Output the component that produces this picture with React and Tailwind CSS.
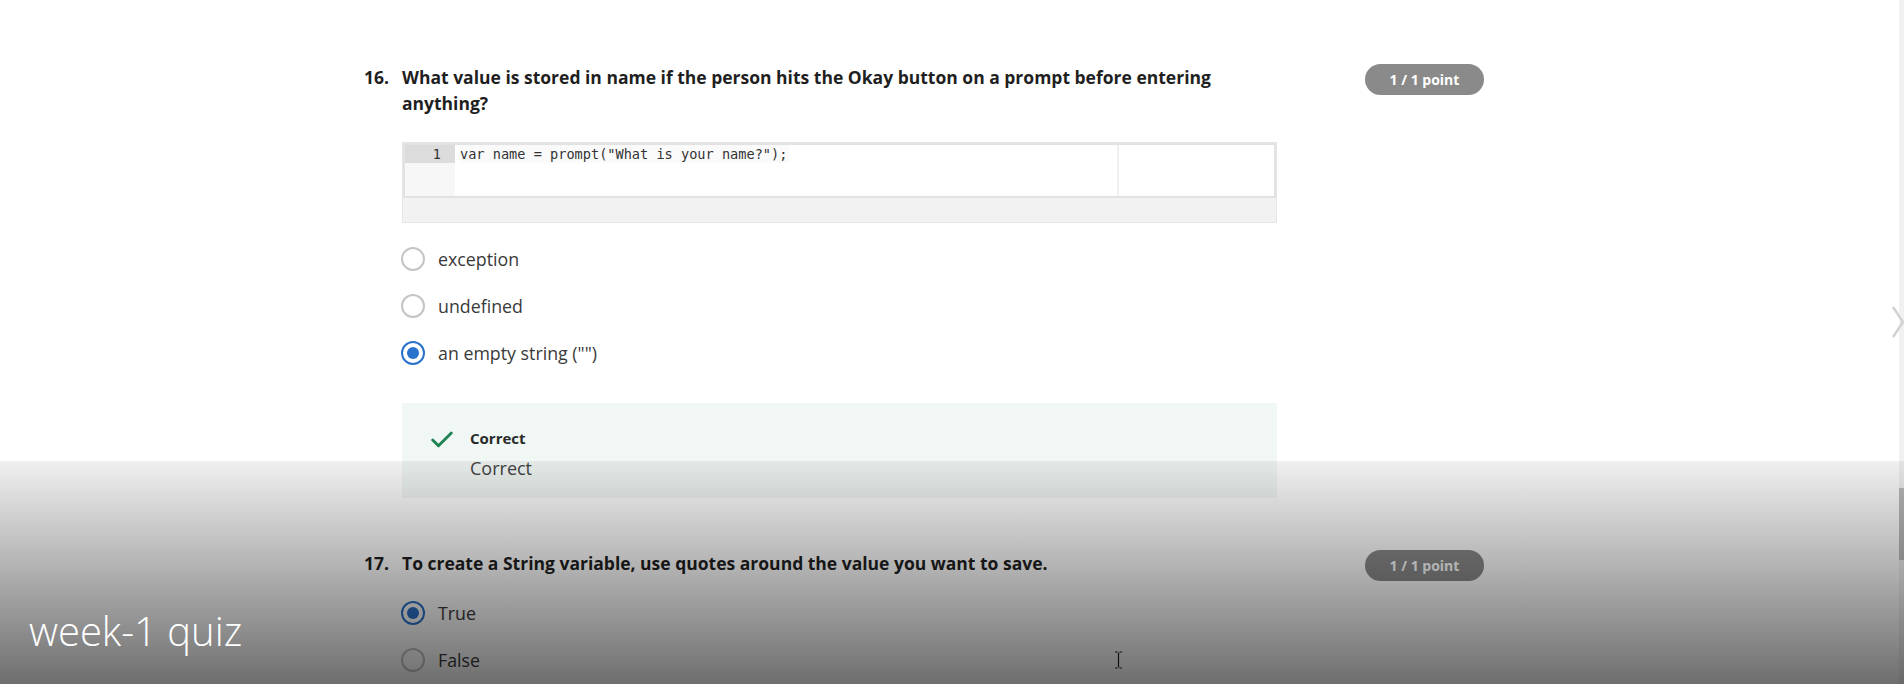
import { Check } from "lucide-react";

const font = { fontFamily: '"Open Sans", "Noto Sans", sans-serif' };
const mono = { fontFamily: '"DejaVu Sans Mono", monospace' };

const Radio = ({ checked, label }) => (
  <div className="flex items-center h-6">
    {checked ? (
      <span className="w-6 h-6 rounded-full border-2 border-[#2a73cc] flex items-center justify-center">
        <span className="w-3 h-3 rounded-full bg-[#2a73cc]" />
      </span>
    ) : (
      <span className="w-6 h-6 rounded-full border-2 border-[#c4c4c4]" />
    )}
    <span className="ml-[13px] text-[17.8px] text-[#3a3a3a]">{label}</span>
  </div>
);

const Badge = () => (
  <div className="shrink-0 w-[119px] h-[31px] rounded-full bg-[#8a8a8a] text-white text-[14px] font-bold flex items-center justify-center">
    1 / 1 point
  </div>
);

const Question = ({ num, title, children }) => (
  <div className="flex">
    <div className="w-[38px] text-[17.5px] font-bold leading-[26px] text-[#1f1f1f]">{num}</div>
    <div className="flex-1">
      <div className="flex items-start justify-between">
        <h3 className="max-w-[850px] text-[17.5px] font-bold leading-[26px] text-[#1f1f1f]">{title}</h3>
        <Badge />
      </div>
      {children}
    </div>
  </div>
);

export default function App() {
  return (
    <div className="relative w-[1904px] h-[684px] overflow-hidden bg-white" style={font}>
      <div className="ml-[364px] w-[1120px] pt-[64px]">
        <Question num="16." title="What value is stored in name if the person hits the Okay button on a prompt before entering anything?">
          {/* code block */}
          <div className="mt-[26px] w-[875px] border border-[#e6e6e6] bg-[#f2f2f2]">
            <div className="h-[55px] border-2 border-[#e2e2e2] bg-white flex">
              <div className="w-[50px] bg-[#f7f7f7]">
                <div className="h-[18px] bg-[#dcdcdc] text-[13.5px] leading-[18px] text-right pr-[14px] text-[#333]" style={mono}>1</div>
              </div>
              <div className="w-[664px] border-r-2 border-[#f0f0f0] pl-[5px]">
                <span className="block h-[18px] text-[13.6px] leading-[18px] text-[#333] bg-[#fafafa] w-fit pr-[2px]" style={mono}>
                  var name = prompt("What is your name?");
                </span>
              </div>
            </div>
            <div className="h-[24px]" />
          </div>

          <div className="mt-[24px] flex flex-col gap-[23px] -ml-[1px]">
            <Radio label="exception" />
            <Radio label="undefined" />
            <Radio checked label='an empty string ("")' />
          </div>

          {/* feedback */}
          <div className="mt-[38px] w-[875px] h-[95px] bg-[#f1f7f4] flex pt-[24px] pl-[26px]">
            <Check className="w-[28px] h-[28px] text-[#1f8354] mt-[-1px]" strokeWidth={2.5} />
            <div className="ml-[14px]">
              <div className="text-[15px] font-bold text-[#2a2a2a] leading-[22px]">Correct</div>
              <div className="text-[18px] text-[#444] leading-[26px] mt-[6px]">Correct</div>
            </div>
          </div>
        </Question>

        <div className="mt-[52px]">
          <Question num="17." title="To create a String variable, use quotes around the value you want to save.">
            <div className="mt-[20px] flex flex-col gap-[23px] -ml-[1px]">
              <Radio checked label="True" />
              <Radio label="False" />
            </div>
          </Question>
        </div>
      </div>

      {/* scrollbar */}
      <div className="absolute right-0 top-0 w-[5px] h-full bg-[#f1f1f1]">
        <div className="mt-[488px] h-[72px] bg-[#bdbdbd]" />
      </div>

      {/* next arrow */}
      <svg className="absolute left-[1891px] top-[305px]" width="14" height="34" viewBox="0 0 14 34">
        <polyline points="2,2 12,17 2,32" fill="none" stroke="#d2d2d2" strokeWidth="2.5" />
      </svg>

      {/* video overlay */}
      <div className="absolute left-0 right-0 top-[461px] bottom-0 bg-gradient-to-b from-[rgba(0,0,0,0.06)] to-[rgba(0,0,0,0.57)]" />

      <div className="absolute left-[29px] top-[604px] text-white text-[40px] font-light leading-[54px]" style={font}>
        week-1 quiz
      </div>

      {/* text cursor */}
      <svg className="absolute left-[1114px] top-[651px]" width="9" height="18" viewBox="0 0 9 18">
        <path d="M1 1h2.5M5.5 1H8M4.5 1.5v15M1 17h2.5M5.5 17H8" stroke="#111" strokeWidth="1.2" fill="none" />
      </svg>
    </div>
  );
}
